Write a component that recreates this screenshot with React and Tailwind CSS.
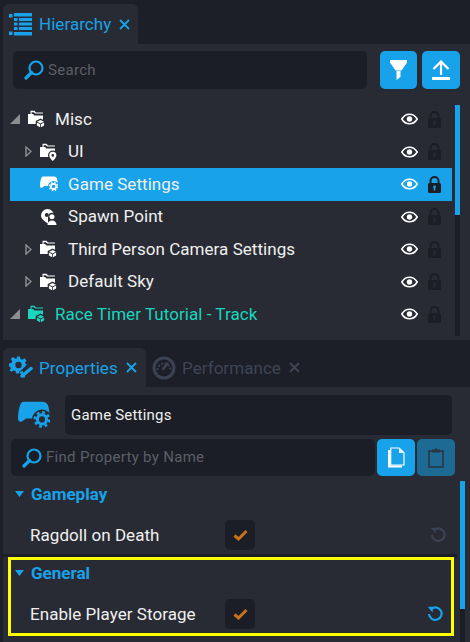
import React from "react";

const FONT = { fontFamily: "Roboto, sans-serif" };

const Cube = ({ color }) => (
  <g>
    <path d="M12.5 8.5l4.8 2.6v4.4l-4.8 2.6-4.8-2.6v-4.4z" fill="#282b33" />
    <path d="M12.5 10l3.4 1.8-3.4 1.8-3.4-1.8z" fill={color} />
    <path d="M8.9 12.6l3.2 1.7v3l-3.2-1.8zM16.1 12.6l-3.2 1.7v3l3.2-1.8z" fill={color} />
  </g>
);

const Pin = ({ color }) => (
  <g>
    <circle cx="12.8" cy="12.4" r="4.8" fill="#282b33" />
    <path d="M12.8 8.8a3.6 3.6 0 0 1 3.6 3.6c0 2.2-2.4 4.2-3.6 5.6-1.2-1.4-3.6-3.4-3.6-5.6a3.6 3.6 0 0 1 3.6-3.6z" fill={color} />
    <circle cx="12.8" cy="12.4" r="1.3" fill="#282b33" />
  </g>
);

const FolderIcon = ({ color = "#ffffff", badge = "cube" }) => (
  <svg width="18" height="18" viewBox="0 0 18 18" className="shrink-0">
    <path d="M2.500 .8h4l1.400 1.600h7v1.200H7.200L5.800 2.200H3.600V10H2.500z" fill={color} />
    <path d="M0 4h5l1.500 1.500H15V14H0z" fill={color} />
    {badge === "cube" ? <Cube color={color} /> : <Pin color={color} />}
  </svg>
);

const Gamepad = ({ color = "#ffffff", back = "#17a2ea", size = 18 }) => (
  <svg width={size} height={size} viewBox="0 0 18 18" className="shrink-0">
    <path d="M3 1.500h11c1.800 0 2.800 1.200 3.200 3l.5 3.500H11l-3 3H4.500l-2 1.500C1 13.300 0 12.500 0 11 0 8 .8 1.500 3 1.500z" fill={color} />
    <circle cx="13.500" cy="11.500" r="5.600" fill={back} />
    <circle cx="13.500" cy="11.500" r="2.600" fill="none" stroke={color} strokeWidth="1.700" />
    <circle cx="13.500" cy="11.500" r="4" fill="none" stroke={color} strokeWidth="1.400" strokeDasharray="1.570 1.570" />
  </svg>
);

const SpawnIcon = () => (
  <svg width="18" height="18" viewBox="0 0 18 18" className="shrink-0">
    <path d="M7.500 1a6.500 6.500 0 0 1 6.500 6.500c0 .6-.1 1.200-.2 1.500H8v6.500C5 13.500 1 11 1 7.500A6.500 6.500 0 0 1 7.500 1z" fill="#fff" />
    <circle cx="6.800" cy="7" r="2" fill="#282b33" />
    <circle cx="12" cy="8.500" r="3.700" fill="#282b33" />
    <circle cx="12" cy="8.800" r="2.500" fill="#fff" />
    <path d="M7.500 17c0-3 2-4.500 4.500-4.500s4.500 1.500 4.500 4.500z" fill="#fff" />
  </svg>
);

const Eye = () => (
  <svg width="17" height="12" viewBox="0 0 17 12" className="shrink-0">
    <path d="M.8 6C2.800 2.700 5.400 1.200 8.500 1.200S14.200 2.700 16.200 6c-2 3.300-4.600 4.800-7.700 4.800S2.800 9.300.8 6z" fill="none" stroke="#fff" strokeWidth="1.600" />
    <circle cx="8.500" cy="6" r="2.700" fill="#fff" />
  </svg>
);

const Lock = ({ color = "#1b1e26", hole = "#282b33" }) => (
  <svg width="13" height="17" viewBox="0 0 13 17" className="shrink-0">
    <path d="M2.500 7V5a4 4 0 0 1 8 0v2" fill="none" stroke={color} strokeWidth="2" />
    <rect x="0" y="7" width="13" height="10" rx="1.500" fill={color} />
    <rect x="5.700" y="10.500" width="1.600" height="4" fill={hole} />
    <circle cx="6.500" cy="10.700" r="1.300" fill={hole} />
  </svg>
);

const Magnifier = () => (
  <svg width="20" height="20" viewBox="0 0 20 20" className="shrink-0">
    <circle cx="12" cy="8" r="6.500" fill="none" stroke="#17a2ea" strokeWidth="2.200" />
    <path d="M7.500 12.500L2 18" stroke="#17a2ea" strokeWidth="3.200" strokeLinecap="round" />
  </svg>
);

const Close = ({ color = "#17a2ea" }) => (
  <svg width="11" height="11" viewBox="0 0 11 11" className="shrink-0">
    <path d="M1 1l9 9M10 1l-9 9" stroke={color} strokeWidth="1.800" />
  </svg>
);

const HierarchyIcon = () => (
  <svg width="24" height="23" viewBox="0 0 24 23" className="shrink-0">
    <g fill="#17a2ea">
      <rect x="0" y="1" width="3.500" height="3.500" />
      <rect x="5" y="0" width="18" height="3.500" />
      <rect x="5" y="5" width="3.500" height="3" />
      <rect x="10" y="5" width="13" height="3" />
      <rect x="5" y="9.500" width="3.500" height="3" />
      <rect x="10" y="9.500" width="13" height="3" />
      <rect x="5" y="14" width="3.500" height="3" />
      <rect x="10" y="14" width="13" height="3" />
      <rect x="0" y="18.500" width="3.500" height="3.500" />
      <rect x="5" y="19" width="18" height="3.500" />
    </g>
  </svg>
);

const PropertiesIcon = () => (
  <svg width="24" height="24" viewBox="0 0 24 24" className="shrink-0">
    <path d="M8 .5h3l.5 2.500 1.700.7 2.200-1.400 2.100 2.100-1.400 2.200.7 1.700 1.200.3-6 6-1.500.6-.7 2.300H7l-.5-2.500-1.700-.7-2.200 1.400L.5 14.600l1.400-2.200-.7-1.700L0 10.500v-3l2.500-.5.700-1.700L1.800 3.100l2.100-2.100 2.200 1.400L7.500 3z" fill="#17a2ea" />
    <circle cx="9.500" cy="9" r="3.200" fill="#282b33" />
    <path d="M22 12.500l-9 7.500" stroke="#17a2ea" strokeWidth="3.500" strokeLinecap="round" />
    <path d="M14 16l-2 .5 3.500 5" stroke="#17a2ea" strokeWidth="2" fill="none" />
  </svg>
);

const GaugeIcon = () => (
  <svg width="24" height="24" viewBox="0 0 24 24" className="shrink-0">
    <circle cx="12" cy="12" r="10" fill="none" stroke="#3b4253" strokeWidth="3" />
    <path d="M5.500 14a6.500 6.500 0 0 1 13 0" fill="none" stroke="#3b4253" strokeWidth="2" strokeDasharray="2 1.500" />
    <path d="M15.500 7.500L11 13" stroke="#3b4253" strokeWidth="2.500" strokeLinecap="round" />
  </svg>
);

const CopyIcon = () => (
  <svg width="18" height="21" viewBox="0 0 18 21" className="shrink-0">
    <path d="M1 3h2v15.500h12V20.500H1z" fill="#fff" />
    <path d="M3.700 1h8.500l4.800 4.800V18H3.700z" fill="#17a2ea" stroke="#fff" strokeWidth="1.200" />
    <path d="M12 1v5h5z" fill="#fff" opacity=".85" />
  </svg>
);

const ClipboardIcon = () => (
  <svg width="16" height="21" viewBox="0 0 16 21" className="shrink-0">
    <rect x="1" y="4" width="14" height="16" fill="none" stroke="#2d3542" strokeWidth="1.600" />
    <path d="M4 5.500V2.500h2.500L8 1l1.500 1.500H12v3z" fill="#2d3542" />
  </svg>
);

const ResetIcon = ({ color }) => (
  <svg width="16" height="16" viewBox="0 0 16 16" className="shrink-0">
    <path d="M3.500 3.500A6.300 6.300 0 1 1 2 8" fill="none" stroke={color} strokeWidth="2.200" />
    <path d="M.8 .8h5.500L5.500 6.500z" fill={color} />
  </svg>
);

const Tab = ({ icon, label, color, closeColor, active, width }) => (
  <div
    className={`flex items-center h-full rounded-t-md ${width} ${active ? "bg-[#282b33]" : ""}`}
  >
    <span className="ml-[6px] flex items-center">{icon}</span>
    <span className={`ml-[6px] pt-[2px] text-[17px] tracking-[.05px] ${color}`}>{label}</span>
    <span className="ml-[8px] flex items-center">
      <Close color={closeColor} />
    </span>
  </div>
);

const Row = ({ indent, arrow, icon, label, selected, teal }) => (
  <div className={`flex items-center h-[32.5px] ${selected ? "bg-[#17a2ea]" : ""}`}>
    <div className={`flex items-center ${indent ? "pl-[15px] w-[30px]" : "pl-0 w-[18px]"} shrink-0`}>
      {arrow === "open" && (
        <svg width="10" height="10" viewBox="0 0 10 10">
          <path d="M10 0v10H0z" fill="#8b8d91" />
        </svg>
      )}
      {arrow === "closed" && (
        <svg width="7" height="11" viewBox="0 0 7 11">
          <path d="M1 1l5 4.500-5 4.500z" fill="none" stroke="#8b8d91" strokeWidth="1.500" />
        </svg>
      )}
    </div>
    {icon}
    <span className={`${indent ? "ml-[10px]" : "ml-[9px]"} text-[17px] tracking-[.05px] ${teal ? "text-[#1ad5bf]" : "text-[#f0f0f0]"} flex-1`}>
      {label}
    </span>
    <div className="flex items-center gap-[10px] pr-[11px]">
      <Eye />
      {selected ? <Lock color="#1b1e26" hole="#17a2ea" /> : <Lock />}
    </div>
  </div>
);

const CheckBox = () => (
  <div className="w-[30px] h-[30px] rounded-[5px] bg-[#1b1e26] flex items-center justify-center">
    <svg width="15" height="12" viewBox="0 0 15 12">
      <path d="M1.500 6.500L5.500 10 13.500 2" fill="none" stroke="#c8721a" strokeWidth="3" />
    </svg>
  </div>
);

const Section = ({ title, label, resetColor, pt }) => (
  <div className={pt}>
    <div className="flex items-center h-[20px]">
      <svg width="9" height="6" viewBox="0 0 9 6" className="ml-[3px]">
        <path d="M0 0h9L4.500 6z" fill="#17a2ea" />
      </svg>
      <span className="ml-[7px] pt-[2px] text-[17px] font-bold text-[#17a2ea]">{title}</span>
    </div>
    <div className="flex items-center h-[30px] mt-[16px]">
      <span className="ml-[18px] pt-[2px] w-[195px] shrink-0 text-[17px] tracking-[.05px] text-[#f0f0f0]">{label}</span>
      <CheckBox />
      <span className="ml-auto mr-[8px]">
        <ResetIcon color={resetColor} />
      </span>
    </div>
  </div>
);

export default function App() {
  return (
    <div style={FONT} className="w-[470px] h-[642px] overflow-hidden bg-[#1c1f27] flex flex-col pl-[3px]">
      {/* hierarchy panel */}
      <div className="h-[40px] mt-[4px] flex shrink-0">
        <Tab
          active
          width="w-[135px]"
          icon={<HierarchyIcon />}
          label="Hierarchy"
          color="text-[#17a2ea]"
          closeColor="#17a2ea"
        />
      </div>
      <div className="h-[296px] bg-[#282b33] shrink-0 flex flex-col">
        <div className="flex mt-[7px] ml-[10px] h-[38px] gap-[5px]">
          <div className="w-[354px] rounded-[5px] bg-[#1b1e26] flex items-center pl-[11px] mr-[8px]">
            <Magnifier />
            <span className="ml-[4px] text-[15px] tracking-[.3px] text-[#5b5e66]">Search</span>
          </div>
          <div className="w-[37px] rounded-[5px] bg-[#17a2ea] flex items-center justify-center">
            <svg width="17" height="20" viewBox="0 0 17 20">
              <path d="M0 0h17v2.500L11.500 10.500h-6L0 2.500z" fill="#fff" />
              <path d="M6.500 11h4v6l-4 3z" fill="#fff" />
            </svg>
          </div>
          <div className="w-[38px] rounded-[5px] bg-[#17a2ea] flex items-center justify-center">
            <svg width="18" height="20" viewBox="0 0 18 20">
              <path d="M1.500 9L9 1.500 16.500 9M9 2v13" fill="none" stroke="#fff" strokeWidth="2.200" />
              <rect x="0" y="17" width="18" height="3" fill="#fff" />
            </svg>
          </div>
        </div>
        <div className="flex mt-[14px] ml-[7px] flex-1 min-h-0">
          <div className="w-[442px] shrink-0">
            <Row arrow="open" icon={<FolderIcon />} label="Misc" />
            <Row indent arrow="closed" icon={<FolderIcon badge="pin" />} label="UI" />
            <Row indent selected icon={<Gamepad />} label="Game Settings" />
            <Row indent icon={<SpawnIcon />} label="Spawn Point" />
            <Row indent arrow="closed" icon={<FolderIcon />} label="Third Person Camera Settings" />
            <Row indent arrow="closed" icon={<FolderIcon />} label="Default Sky" />
            <Row arrow="open" icon={<FolderIcon color="#1ad5bf" />} label="Race Timer Tutorial - Track" teal />
          </div>
          <div className="w-[5px] ml-[3px] mt-[2px] h-[231px] bg-[#1b1e26]">
            <div className="h-[110px] bg-[#17a2ea]" />
          </div>
        </div>
      </div>

      {/* properties panel */}
      <div className="h-[8px] shrink-0" />
      <div className="h-[39px] flex shrink-0">
        <Tab
          active
          width="w-[143px]"
          icon={<PropertiesIcon />}
          label="Properties"
          color="text-[#17a2ea]"
          closeColor="#17a2ea"
        />
        <Tab
          width="w-[160px]"
          icon={<GaugeIcon />}
          label="Performance"
          color="text-[#3f4555]"
          closeColor="#3f4555"
        />
      </div>
      <div className="flex-1 bg-[#282b33] flex flex-col min-h-0">
        <div className="flex items-center mt-[8px] h-[40px] pl-[15px]">
          <Gamepad color="#17a2ea" back="#282b33" size={32} />
          <div className="ml-[15px] w-[387px] h-full rounded-[5px] bg-[#1b1e26] flex items-center pl-[6px] text-[15px] tracking-[.2px] text-[#f0f0f0]">
            Game Settings
          </div>
        </div>
        <div className="flex mt-[4px] h-[37px] pl-[8px]">
          <div className="w-[364px] rounded-[5px] bg-[#1b1e26] flex items-center pl-[11px]">
            <Magnifier />
            <span className="ml-[4px] text-[15px] tracking-[.3px] text-[#5b5e66]">Find Property by Name</span>
          </div>
          <div className="ml-[2px] w-[38px] rounded-[5px] bg-[#17a2ea] flex items-center justify-center">
            <CopyIcon />
          </div>
          <div className="ml-[2px] w-[38px] rounded-[5px] bg-[#1d6a94] flex items-center justify-center">
            <ClipboardIcon />
          </div>
        </div>
        <div className="flex flex-1 min-h-0 mt-[5px]">
          <div className="w-[454px] shrink-0">
            <div className="pl-[9px] pr-[3px] pt-[3px] h-[76px] border-b-[3px] border-[#1b1e26]">
              <Section title="Gameplay" label="Ragdoll on Death" resetColor="#3b4253" />
            </div>
            <div className="ml-[5px] mr-[3px] h-[79px] border-[3px] border-[#ffff00] pl-[1px]">
              <Section title="General" label="Enable Player Storage" resetColor="#17a2ea" pt="pt-[3px]" />
            </div>
          </div>
          <div className="w-[5px] ml-[3px] bg-[#1b1e26]">
            <div className="h-[128px] bg-[#17a2ea]" />
          </div>
        </div>
      </div>
    </div>
  );
}
